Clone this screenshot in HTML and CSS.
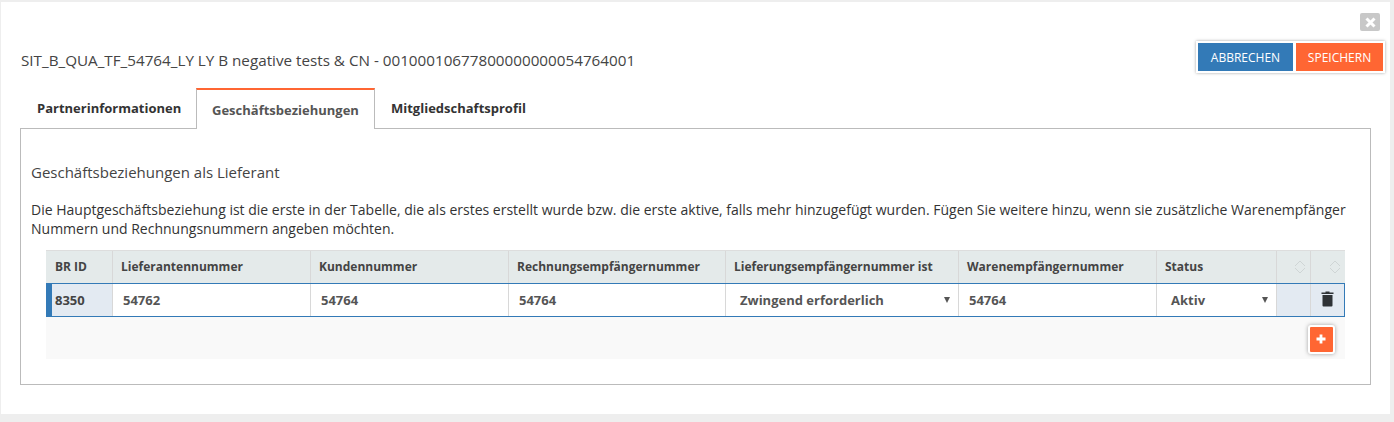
FILE: index.html
```html
<!DOCTYPE html>
<html lang="de">
<head>
<meta charset="utf-8">
<title>Geschäftsbeziehungen</title>
<link rel="stylesheet" href="styles.css">
</head>
<body>
<div class="panel">
  <div class="close-row"><button class="close" aria-label="Schließen"><svg width="11" height="11" viewBox="0 0 11 11"><path d="M1.500 1.500l8 8M9.500 1.500l-8 8" stroke="#fff" stroke-width="3" fill="none"/></svg></button></div>
  <div class="head">
    <h1 class="title">SIT_B_QUA_TF_54764_LY LY B negative tests &amp; CN - 00100010677800000000054764001</h1>
    <div class="actions">
      <button class="btn btn-blue">ABBRECHEN</button>
      <button class="btn btn-orange">SPEICHERN</button>
    </div>
  </div>
  <div class="tabs">
    <a class="tab">Partnerinformationen</a>
    <a class="tab active">Geschäftsbeziehungen</a>
    <a class="tab">Mitgliedschaftsprofil</a>
  </div>
  <div class="content">
    <h2 class="subtitle">Geschäftsbeziehungen als Lieferant</h2>
    <p class="desc">Die Hauptgeschäftsbeziehung ist die erste in der Tabelle, die als erstes erstellt wurde bzw. die erste aktive, falls mehr hinzugefügt wurden. Fügen Sie weitere hinzu, wenn sie zusätzliche Warenempfänger Nummern und Rechnungsnummern angeben möchten.</p>
    <div class="grid">
      <div class="row row-head">
        <div class="cell c-id">BR ID</div>
        <div class="cell c-a">Lieferantennummer</div>
        <div class="cell c-a">Kundennummer</div>
        <div class="cell c-b">Rechnungsempfängernummer</div>
        <div class="cell c-c">Lieferungsempfängernummer ist</div>
        <div class="cell c-a">Warenempfängernummer</div>
        <div class="cell c-d">Status</div>
        <div class="cell c-e sort"><svg width="12" height="14" viewBox="0 0 12 14"><path d="M1 6l5-5 5 5M1 8l5 5 5-5" stroke="#cfd5d5" fill="none"/></svg></div>
        <div class="cell c-e sort"><svg width="12" height="14" viewBox="0 0 12 14"><path d="M1 6l5-5 5 5M1 8l5 5 5-5" stroke="#cfd5d5" fill="none"/></svg></div>
      </div>
      <div class="row row-body">
        <div class="cell c-id id-val">8350</div>
        <div class="cell c-a val">54762</div>
        <div class="cell c-a val">54764</div>
        <div class="cell c-b val">54764</div>
        <div class="cell c-c val sel"><span class="sel-text">Zwingend erforderlich</span><span class="caret"></span></div>
        <div class="cell c-a val val-w">54764</div>
        <div class="cell c-d val sel"><span class="sel-text">Aktiv</span><span class="caret"></span></div>
        <div class="cell c-e tint"></div>
        <div class="cell c-e tint trash"><svg width="13" height="16" viewBox="0 0 13 16"><path d="M4.500 1.500V.6h4v.9H12.500v1.600H.5V1.500zM1.500 4h10v10.500q0 1-1 1h-8q-1 0-1-1z" fill="#2f3336"/></svg></div>
      </div>
      <div class="add-row"><button class="add" aria-label="Hinzufügen"><svg width="10" height="10" viewBox="0 0 10 10"><path d="M5 .5v9M.5 5h9" stroke="#fff" stroke-width="2.800"/></svg></button></div>
    </div>
  </div>
</div>
</body>
</html>
```
FILE: styles.css
```css
* { box-sizing: border-box; }
html, body { margin: 0; height: 422px; overflow: hidden; }
body { background: #eeeeee; font-family: "Open Sans", sans-serif; color: #444; padding: 2px 4px 8px 1px; }
.panel { background: #fff; height: 412px; padding: 11px 19px 0 19px; }
.close-row { display: flex; justify-content: flex-end; height: 18px; margin-right: -9px; }
.close { width: 20px; height: 18px; border: 0; padding: 0; border-radius: 2px; background: #c8c8c8; display: flex; align-items: center; justify-content: center; }
.head { display: flex; justify-content: space-between; align-items: center; height: 32px; margin-top: 10px; margin-right: -14px; }
.title { margin: 0 0 0 1px; font-size: 15.22px; font-weight: 400; color: #444; line-height: 20px; position: relative; top: 3px; }
.actions { display: flex; gap: 3px; padding: 2px; background: #fff; box-shadow: 0 0 3px rgba(0,0,0,.35); }
.btn { height: 28px; border: 0; padding: 0; font: 400 12px "Open Sans", sans-serif; color: #fff; }
.btn-blue { width: 95px; background: #337ab7; }
.btn-orange { width: 87px; background: #ff6633; }
.tabs { display: flex; height: 41px; margin-top: 15px; padding-left: 1px; margin-bottom: -1px; align-items: stretch; }
.tab { font-size: 13px; font-weight: 700; color: #333; padding: 0 16px; line-height: 40px; }
.tab:first-child { width: 175px; padding: 0 0 0 16px; }
.tab.active { width: 179px; color: #555; background: #fff; border: 1px solid #bbb; border-top: 2px solid #ff6633; border-bottom: 0; padding: 0 15px; height: 41px; position: relative; z-index: 1; line-height: 40px; }
.content { border: 1px solid #bbb; height: 257px; padding: 33px 22px 0 10px; }
.subtitle { margin: 0; font-size: 15px; font-weight: 400; line-height: 20px; color: #444; }
.desc { margin: 18px 0 0; font-size: 14px; line-height: 19px; color: #333; }
.grid { margin: 12px 0 0 15px; width: 1299px; }
.row { display: flex; }
.row-head { height: 33px; background: #e4eaea; border-top: 1px solid #ddd; }
.row-body { height: 34px; border: 1px solid #337ab7; border-left: 6px solid #337ab7; background: #fff; }
.cell { flex: none; display: flex; align-items: center; font-size: 12px; font-weight: 700; color: #444; padding-left: 8px; border-right: 1px solid #d8d8d8; }
.row-head .cell { padding-bottom: 1px; }
.row-head .c-id { padding-left: 9px; }
.c-id { width: 67px; }
.c-a { width: 198px; }
.c-b { width: 217px; }
.c-c { width: 233px; }
.c-d { width: 120px; }
.c-e { width: 34px; }
.c-e:last-child { border-right: 0; }
.row-body .c-id { width: 61px; background: #e3eaf2; padding-left: 3px; font-size: 13px; }
.val { font-size: 13px; padding-left: 10px; color: #555; }
.sel { justify-content: space-between; padding: 0 8px 0 14px; }
.caret { width: 0; height: 0; border-left: 3px solid transparent; border-right: 3px solid transparent; border-top: 6px solid #555; }
.sort { justify-content: flex-end; padding: 0 4px 1px 0; }
.tint { background: #e3eaf2; }
.row-body .c-e:last-child { width: 33px; }
.trash { justify-content: center; padding: 0 0 2px; }
.add-row { height: 42px; background: #f9f9f9; display: flex; justify-content: flex-end; align-items: flex-start; padding: 8px 10px 0 0; }
.add { width: 27px; height: 29px; border: 2px solid #fff; border-radius: 3px; background: #ff6633; box-shadow: 0 0 4px rgba(0,0,0,.35); padding: 0 2px 2px 0; display: flex; align-items: center; justify-content: center; }
```
